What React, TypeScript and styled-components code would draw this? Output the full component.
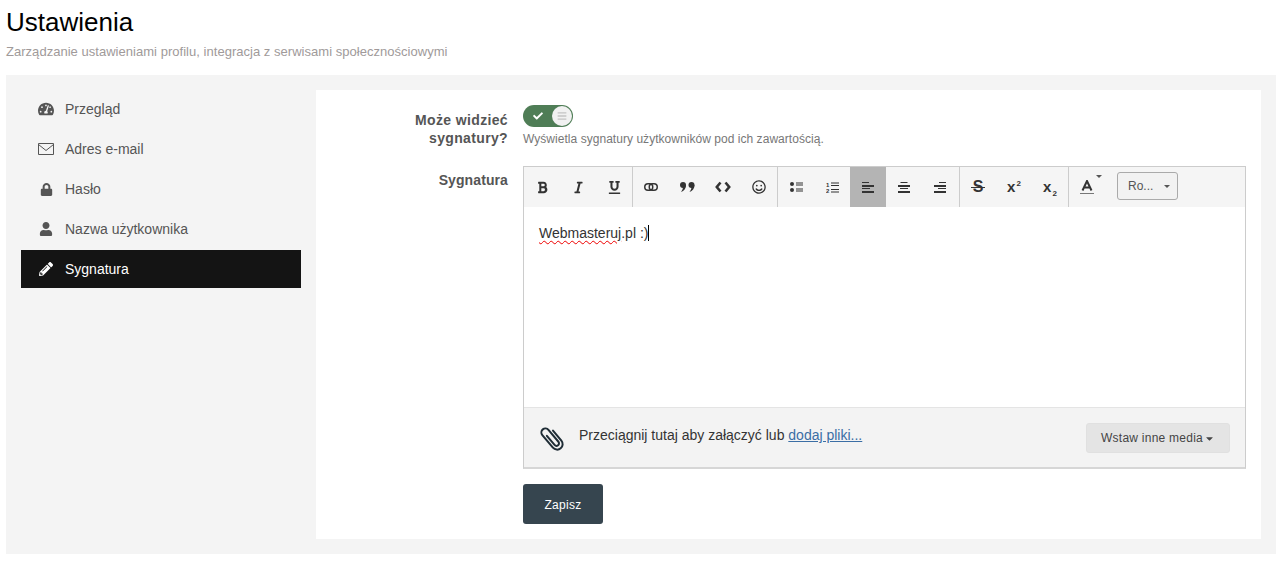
import React from 'react'
import styled, { createGlobalStyle } from 'styled-components'
import {
  FaBold,
  FaItalic,
  FaUnderline,
  FaRegSmile,
  FaTachometerAlt,
  FaLock,
  FaUser,
  FaPencilAlt,
  FaCheck,
  FaBars,
  FaCaretDown,
} from 'react-icons/fa'

const GlobalStyle = createGlobalStyle`
  html, body {
    margin: 0;
    padding: 0;
    background: #fff;
    font-family: "Liberation Sans", Arial, sans-serif;
    font-size: 14px;
    color: #333;
  }
  * { box-sizing: border-box; }
`

const Page = styled.div`
  width: 1276px;
  height: 566px;
  overflow: hidden;
`

const Header = styled.header`
  padding: 7px 6px 0;
  height: 75px;
`

const Title = styled.h1`
  margin: 0;
  font-size: 26px;
  line-height: 30px;
  font-weight: 400;
  color: #000;
`

const Subtitle = styled.p`
  margin: 7px 0 0;
  font-size: 13px;
  line-height: 15px;
  letter-spacing: 0.03px;
  color: #a09a9a;
`

const Panel = styled.div`
  margin-left: 6px;
  height: 479px;
  background: #f4f4f4;
  padding: 15px;
  display: flex;
  gap: 15px;
`

const Sidebar = styled.nav`
  width: 280px;
  display: flex;
  flex-direction: column;
  gap: 2px;
`

const NavItem = styled.a<{ $active?: boolean }>`
  height: 38px;
  display: flex;
  align-items: center;
  padding-left: 17px;
  gap: 11px;
  font-size: 14px;
  background: ${(p) => (p.$active ? '#141414' : 'transparent')};
  color: ${(p) => (p.$active ? '#fff' : '#555')};
`

const NavIcon = styled.span`
  width: 16px;
  display: flex;
  justify-content: center;
  font-size: 16px;
`

const Content = styled.main`
  flex: 1;
  background: #fff;
  padding: 15px;
  display: flex;
  flex-direction: column;
`

const Row = styled.div`
  display: flex;
  gap: 15px;
`

const Label = styled.label<{ $top?: number; $spacing?: number }>`
  width: 177px;
  padding-left: 30px;
  text-align: right;
  font-weight: 700;
  font-size: 14px;
  line-height: 18px;
  letter-spacing: ${(p) => p.$spacing ?? 0.1}px;
  color: #555;
  padding-top: ${(p) => p.$top ?? 0}px;
`

const Control = styled.div`
  flex: 1;
  min-width: 0;
`

const Toggle = styled.div`
  width: 50px;
  height: 22px;
  border-radius: 11px;
  background: #4f7d56;
  display: flex;
  align-items: center;
  justify-content: space-between;
  padding: 0 1px 0 10px;
  color: #fff;
  font-size: 10px;
`

const Knob = styled.span`
  width: 20px;
  height: 20px;
  border-radius: 50%;
  background: #f1f1f1;
  color: #c4c4c4;
  font-size: 10px;
  display: flex;
  align-items: center;
  justify-content: center;
`

const Hint = styled.p`
  margin: 5px 0 0;
  font-size: 12px;
  line-height: 14px;
  letter-spacing: 0.04px;
  color: #777;
  height: 34px;
`

const Editor = styled.div`
  border: 1px solid #ccc;
  border-bottom: 2px solid #d6d6d6;
`

const Toolbar = styled.div`
  height: 40px;
  background: #f5f5f5;
  display: flex;
  align-items: stretch;
`

const ToolGroup = styled.div<{ $last?: boolean; $pad?: number }>`
  display: flex;
  padding-right: ${(p) => p.$pad ?? 0}px;
  border-right: ${(p) => (p.$last ? 'none' : '1px solid #ccc')};
`

const ToolButton = styled.button<{ $active?: boolean }>`
  width: 36px;
  border: none;
  padding: 0;
  background: ${(p) => (p.$active ? '#b4b4b4' : 'transparent')};
  color: #333;
  font-size: 13px;
  display: flex;
  align-items: center;
  justify-content: center;
  position: relative;
`

const StrikeGlyph = styled.span`
  position: relative;
  font-family: inherit;
  font-weight: 700;
  font-size: 16px;
  line-height: 16px;

  &::after {
    content: '';
    position: absolute;
    left: -2px;
    right: -2px;
    top: 8px;
    height: 1px;
    background: #333;
  }
`

const ScriptGlyph = styled.span`
  font-family: inherit;
  font-weight: 700;
  font-size: 15px;
  line-height: 14px;

  sup,
  sub {
    font-size: 8px;
    line-height: 0;
    margin-left: 1px;
  }
`

const FontSelect = styled.div`
  width: 61px;
  height: 28px;
  margin: 5px 0 0 12px;
  border: 1px solid #aaa;
  border-radius: 3px;
  background: #f2f2f2;
  display: flex;
  align-items: center;
  justify-content: space-between;
  padding: 0 7px 0 10px;
  font-size: 12px;
  color: #555;
`

const SmallCaret = styled.span`
  width: 0;
  height: 0;
  border-left: 3px solid transparent;
  border-right: 3px solid transparent;
  border-top: 3px solid #555;
`

const ColorCaret = styled(SmallCaret)`
  position: absolute;
  top: 8px;
  right: 3px;
`

const TextArea = styled.div`
  height: 200px;
  background: #fff;
  padding: 18px 15px 0;
  font-size: 14px;
  line-height: 17px;
  color: #333;
`

const Misspelled = styled.span`
  text-decoration: underline wavy #e00;
  text-decoration-thickness: 1px;
  text-underline-offset: 2px;
`

const Cursor = styled.span`
  border-right: 1px solid #000;
`

const Attach = styled.div`
  height: 60px;
  background: #f3f3f3;
  border-top: 1px solid #e4e4e4;
  display: flex;
  align-items: center;
  padding: 0 15px;
  gap: 14px;
`

const AttachText = styled.span`
  flex: 1;
  font-size: 14px;
  margin-top: -5px;
`

const AttachLink = styled.a`
  color: #3b6ea5;
  text-decoration: underline;
`

const MediaButton = styled.button`
  width: 144px;
  height: 30px;
  margin-top: 1px;
  border: 1px solid #e0e0e0;
  border-radius: 3px;
  background: #e4e4e4;
  color: #444;
  font-family: inherit;
  font-size: 12px;
  letter-spacing: 0.25px;
  display: flex;
  align-items: center;
  justify-content: center;
  gap: 1px;
`

const SaveButton = styled.button`
  width: 80px;
  height: 40px;
  margin-top: 15px;
  padding-top: 2px;
  border: none;
  border-radius: 3px;
  background: #36454f;
  color: #fff;
  font-family: inherit;
  font-size: 12px;
  letter-spacing: 0.3px;
`

function CodeIcon() {
  return (
    <svg width="16" height="12" viewBox="0 0 16 12" fill="none" stroke="currentColor" strokeWidth="2.6">
      <path d="M5.5 1.5 1.8 6l3.7 4.500M10.500 1.500 14.200 6l-3.700 4.500" />
    </svg>
  )
}

function MailIcon() {
  return (
    <svg width="16" height="12" viewBox="0 0 16 12" fill="none" stroke="currentColor" strokeWidth="1">
      <path d="M.5.5h15v11H.5zM.5 1.500 8 7.500l7.500-6" />
    </svg>
  )
}

function LinkIcon() {
  return (
    <svg width="14" height="8" viewBox="0 0 14 8" fill="none" stroke="currentColor" strokeWidth="1.5">
      <rect x="0.75" y="0.75" width="8" height="6.500" rx="3.250" />
      <rect x="5.250" y="0.75" width="8" height="6.500" rx="3.250" />
    </svg>
  )
}

function QuoteIcon() {
  return (
    <svg width="15" height="10" viewBox="0 0 15 10" fill="currentColor">
      <circle cx="3" cy="3" r="3" />
      <circle cx="11.500" cy="3" r="3" />
      <path d="M6 3C6 6.500 4 9 1 10c1.200-1.500 1.800-3 2-5zM14.500 3c0 3.500-2 6-5 7 1.200-1.500 1.800-3 2-5z" />
    </svg>
  )
}

function BulletListIcon() {
  return (
    <svg width="13" height="10" viewBox="0 0 13 10" fill="currentColor">
      <circle cx="2" cy="2" r="2" />
      <circle cx="2" cy="8" r="2" />
      <path d="M6 .5h7v1H6zM6 2.500h7v1H6zM6 6.500h7v1H6zM6 8.500h7v1H6z" />
    </svg>
  )
}

function NumberListIcon() {
  return (
    <svg width="13" height="11" viewBox="0 0 13 11" fill="currentColor">
      <text x="0" y="5" fontSize="6" fontWeight="700" fontFamily="Liberation Sans, sans-serif">1</text>
      <text x="0" y="11" fontSize="6" fontWeight="700" fontFamily="Liberation Sans, sans-serif">2</text>
      <path d="M5 .5h8v1H5zM5 3h8v1H5zM5 7h8v1H5zM5 9.500h8v1H5z" />
    </svg>
  )
}

const alignRows = [
  { width: 7, y: 0, height: 1 },
  { width: 12, y: 3, height: 2 },
  { width: 8, y: 6, height: 1 },
  { width: 12, y: 9, height: 2 },
]

function AlignIcon({ side }: { side: 'left' | 'center' | 'right' }) {
  const offset = (w: number) => (side === 'left' ? 0 : side === 'center' ? (12 - w) / 2 : 12 - w)
  return (
    <svg width="12" height="11" viewBox="0 0 12 11" fill="currentColor">
      {alignRows.map((r) => (
        <rect key={r.y} x={offset(r.width)} y={r.y} width={r.width} height={r.height} />
      ))}
    </svg>
  )
}

function FontColorIcon() {
  return (
    <svg width="16" height="14" viewBox="0 0 16 14" fill="none" stroke="currentColor">
      <path d="M3.500 10.500 8 1l4.500 9.500M5 7.500h6" strokeWidth="2" />
      <path d="M1 13.500h14" strokeWidth="1" stroke="#777" />
    </svg>
  )
}

function PaperclipIcon() {
  return (
    <svg width="26" height="28" viewBox="0 0 26 28" fill="none" stroke="#1f2d36" strokeWidth="2" strokeLinecap="round">
      <g transform="rotate(-40 13 14)">
        <path d="M10.500 9V21a2.500 2.500 0 0 0 5 0V5.500a4 4 0 0 0-8 0V22a5.500 5.500 0 0 0 11 0V9" />
      </g>
    </svg>
  )
}

const navItems = [
  { label: 'Przegląd', icon: <FaTachometerAlt /> },
  { label: 'Adres e-mail', icon: <MailIcon /> },
  { label: 'Hasło', icon: <FaLock size={13} /> },
  { label: 'Nazwa użytkownika', icon: <FaUser size={14} /> },
  { label: 'Sygnatura', icon: <FaPencilAlt size={14} />, active: true },
]

export default function App(): JSX.Element {
  return (
    <Page>
      <GlobalStyle />
      <Header>
        <Title>Ustawienia</Title>
        <Subtitle>Zarządzanie ustawieniami profilu, integracja z serwisami społecznościowymi</Subtitle>
      </Header>
      <Panel>
        <Sidebar>
          {navItems.map((item) => (
            <NavItem key={item.label} $active={item.active}>
              <NavIcon>{item.icon}</NavIcon>
              {item.label}
            </NavItem>
          ))}
        </Sidebar>
        <Content>
          <Row>
            <Label $top={6} $spacing={0.35}>Może widzieć sygnatury?</Label>
            <Control>
              <Toggle>
                <FaCheck />
                <Knob>
                  <FaBars />
                </Knob>
              </Toggle>
              <Hint>Wyświetla sygnatury użytkowników pod ich zawartością.</Hint>
            </Control>
          </Row>
          <Row>
            <Label $top={5}>Sygnatura</Label>
            <Control>
              <Editor>
                <Toolbar>
                  <ToolGroup>
                    <ToolButton><FaBold /></ToolButton>
                    <ToolButton><FaItalic /></ToolButton>
                    <ToolButton><FaUnderline /></ToolButton>
                  </ToolGroup>
                  <ToolGroup>
                    <ToolButton><LinkIcon /></ToolButton>
                    <ToolButton><QuoteIcon /></ToolButton>
                    <ToolButton><CodeIcon /></ToolButton>
                    <ToolButton><FaRegSmile size={14} /></ToolButton>
                  </ToolGroup>
                  <ToolGroup $pad={1}>
                    <ToolButton><BulletListIcon /></ToolButton>
                    <ToolButton><NumberListIcon /></ToolButton>
                    <ToolButton $active><AlignIcon side="left" /></ToolButton>
                    <ToolButton><AlignIcon side="center" /></ToolButton>
                    <ToolButton><AlignIcon side="right" /></ToolButton>
                  </ToolGroup>
                  <ToolGroup>
                    <ToolButton><StrikeGlyph>S</StrikeGlyph></ToolButton>
                    <ToolButton><ScriptGlyph>x<sup>2</sup></ScriptGlyph></ToolButton>
                    <ToolButton><ScriptGlyph>x<sub>2</sub></ScriptGlyph></ToolButton>
                  </ToolGroup>
                  <ToolGroup $last>
                    <ToolButton>
                      <FontColorIcon />
                      <ColorCaret />
                    </ToolButton>
                    <FontSelect>
                      Ro...
                      <SmallCaret />
                    </FontSelect>
                  </ToolGroup>
                </Toolbar>
                <TextArea>
                  <Cursor>
                    <Misspelled>Webmasteruj</Misspelled>.pl :)
                  </Cursor>
                </TextArea>
                <Attach>
                  <PaperclipIcon />
                  <AttachText>
                    Przeciągnij tutaj aby załączyć lub <AttachLink>dodaj pliki...</AttachLink>
                  </AttachText>
                  <MediaButton>
                    Wstaw inne media
                    <FaCaretDown size={11} />
                  </MediaButton>
                </Attach>
              </Editor>
              <SaveButton>Zapisz</SaveButton>
            </Control>
          </Row>
        </Content>
      </Panel>
    </Page>
  )
}
